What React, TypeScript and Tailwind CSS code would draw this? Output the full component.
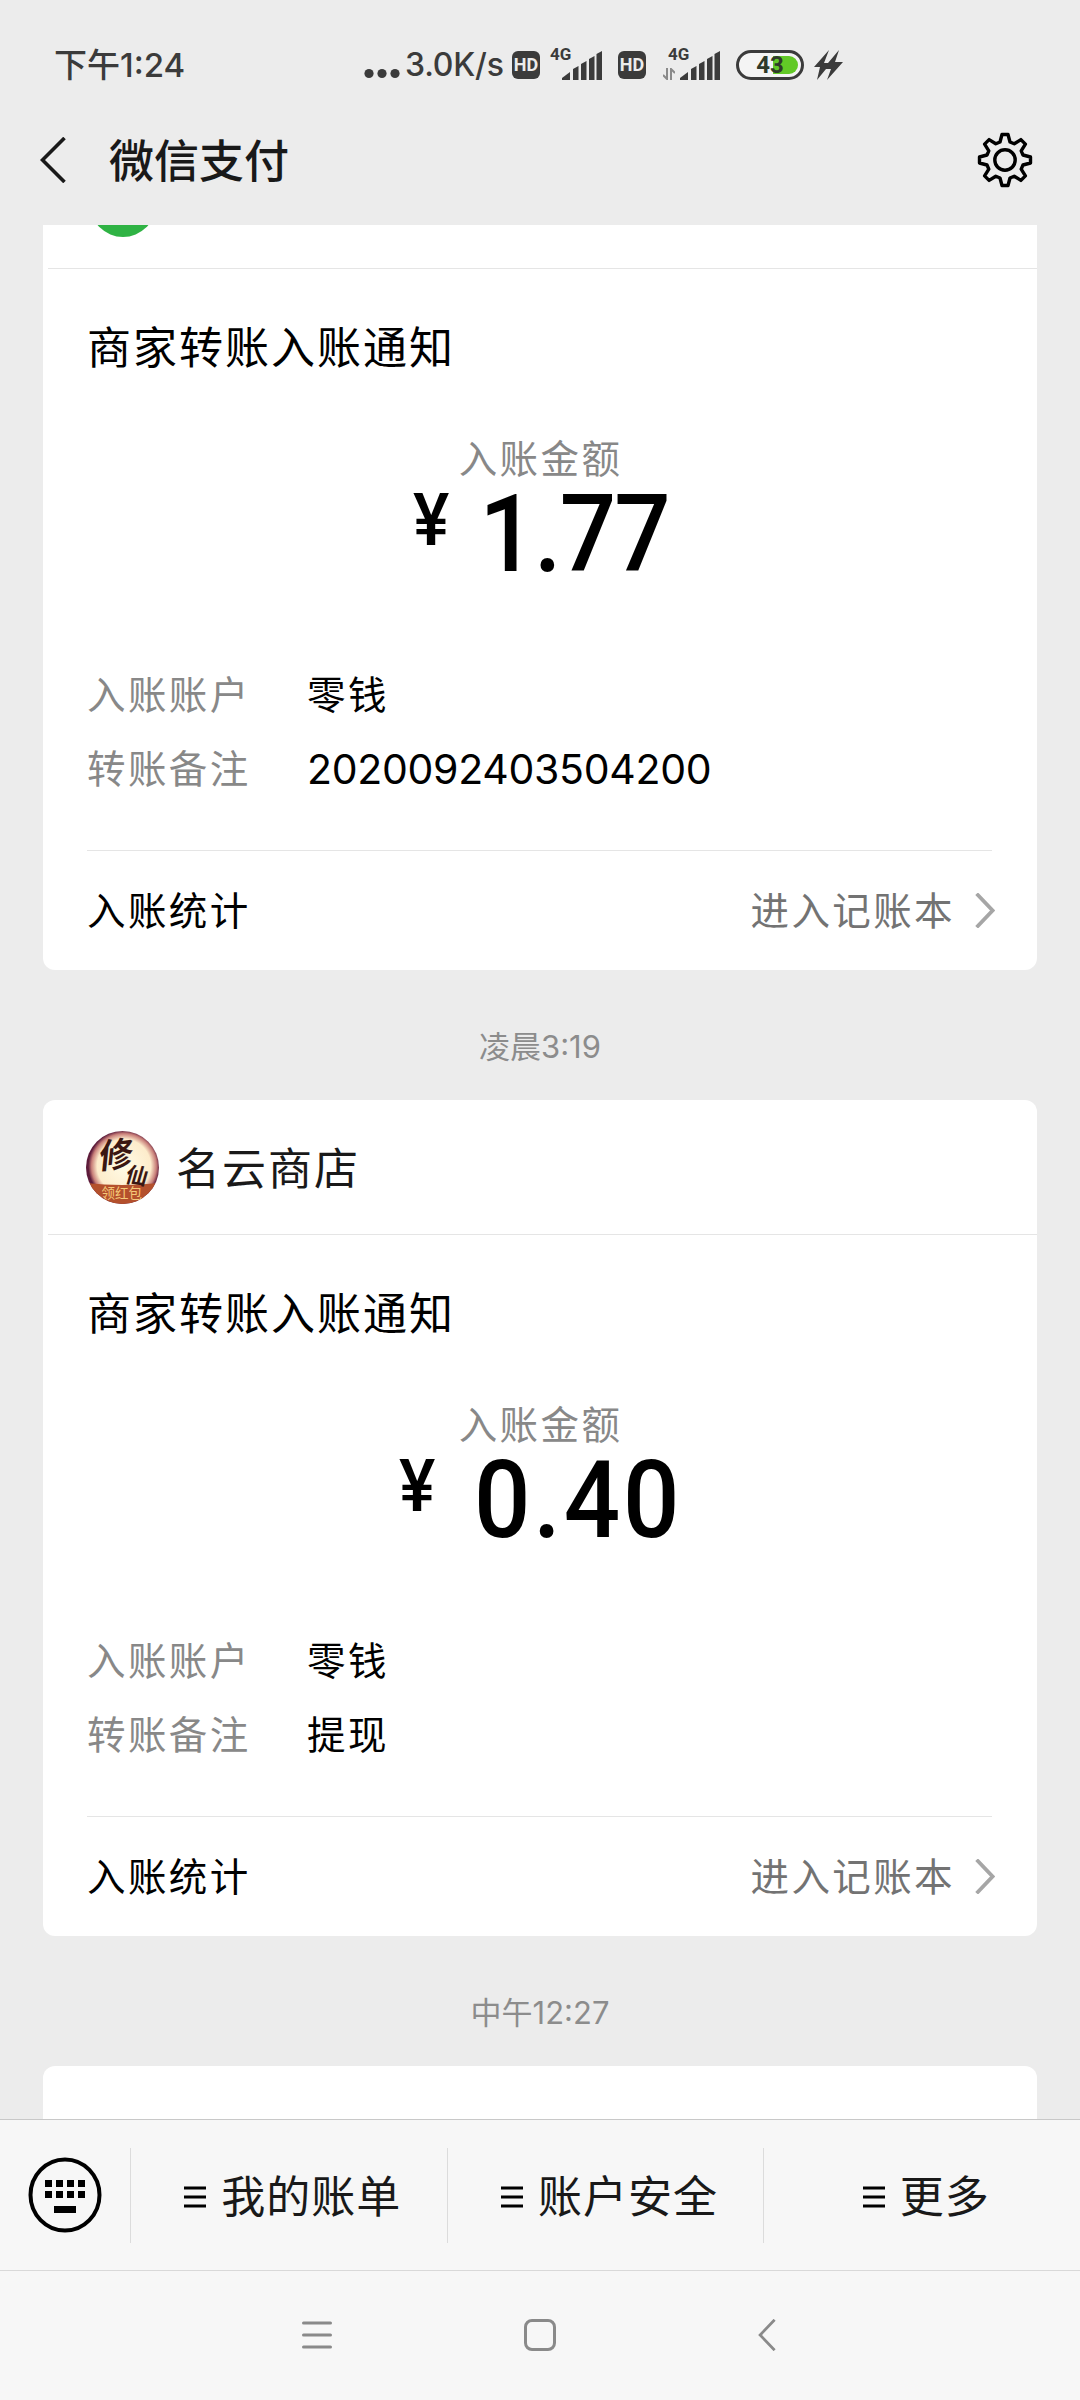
import type { ReactNode } from 'react'

interface Notice {
  amount: string
  amountStyle: string
  remark: string
  avatar: ReactNode
  name: string
}

// 通用箭头
function Chevron({ className, d, strokeWidth }: { className: string; d: string; strokeWidth: number }) {
  return (
    <svg className={className} viewBox="0 0 26 46" fill="none" stroke="currentColor" strokeWidth={strokeWidth}>
      <path d={d} />
    </svg>
  )
}

// 信号强度
function Signal() {
  return (
    <svg className="w-10 h-[29px] shrink-0" viewBox="0 0 40 29" fill="currentColor">
      <path d="M0 29v-2l8-6v8z" />
      <path d="M11 29V18l5.500-3v14z" />
      <path d="M19 29V13l5.500-3v19z" />
      <path d="M27 29V8l5.500-3v24z" />
      <path d="M34.500 29V3L40 0v29z" />
    </svg>
  )
}

function HdBadge() {
  return (
    <span className="flex items-center justify-center w-7 h-7 shrink-0 rounded-md bg-[#3b3b3b] text-[#ececec] font-[Roboto,sans-serif] text-[18px] leading-none font-bold">
      HD
    </span>
  )
}

function NetworkType() {
  return (
    <span className="absolute -left-3 -top-[5px] font-[Roboto,sans-serif] text-[17px] leading-none font-bold">4G</span>
  )
}

function Battery() {
  return (
    <span className="relative flex items-center justify-center w-[68px] h-[30px] rounded-full border-[3px] border-[#3b3b3b] bg-[#f4f4f4] overflow-hidden">
      <span className="absolute right-[3px] top-[3px] w-[25px] h-[18px] rounded-r-full bg-[#62c926]" />
      <span className="relative font-[Roboto,sans-serif] text-[24px] leading-none font-bold text-[#2f3a2a]">43</span>
    </span>
  )
}

function StatusBar() {
  return (
    <div className="flex items-center h-[130px] pl-[54px] text-[#3b3b3b]">
      <span className="w-[310px] text-[33px] leading-none font-medium">下午1:24</span>
      <svg className="w-9 h-7 mr-[5px]" viewBox="0 0 36 28" fill="currentColor">
        <circle cx="5" cy="22.500" r="4.600" />
        <circle cx="18" cy="22.500" r="4.600" />
        <circle cx="31" cy="22.500" r="4.600" />
      </svg>
      <span className="w-[107px] text-[32px] leading-none font-medium tracking-[-0.200px]">3.0K/s</span>
      <HdBadge />
      <div className="relative ml-[22px]">
        <Signal />
        <NetworkType />
      </div>
      <div className="ml-4">
        <HdBadge />
      </div>
      <div className="relative ml-[34px]">
        <Signal />
        <NetworkType />
        <svg className="absolute -left-[17px] top-[17px] w-3 h-3 text-[#8a8a8a]" viewBox="0 0 12 12" fill="none" stroke="currentColor" strokeWidth="2">
          <path d="M4 0v11L0 7M8 12V1l4 4" />
        </svg>
      </div>
      <div className="ml-4">
        <Battery />
      </div>
      <svg className="ml-2.5 w-[29px] h-[30px]" viewBox="0 0 29 30" fill="currentColor">
        <path d="M15 0 0 17h6L3 30l9-11h5l-4 11 16-18h-8l4-12-11 13h-4z" />
      </svg>
    </div>
  )
}

// 设置齿轮
function GearIcon() {
  return (
    <svg className="w-14 h-14 text-black" viewBox="-28 -28 56 56" fill="none" stroke="currentColor" strokeWidth="3.400" strokeLinejoin="round">
      <circle r="10.200" />
      <path d="M-3 -25.500H3L5 -18L9.200 -16.200L15.900 -20.400L20.400 -15.900L16.200 -9.200L18 -5L25.500 -3V3L18 5L16.200 9.200L20.400 15.900L15.900 20.400L9.200 16.200L5 18L3 25.500H-3L-5 18L-9.200 16.200L-15.900 20.400L-20.400 15.900L-16.200 9.200L-18 5L-25.500 3V-3L-18 -5L-16.200 -9.200L-20.400 -15.900L-15.900 -20.400L-9.200 -16.200L-5 -18Z" />
    </svg>
  )
}

function TitleBar() {
  return (
    <div className="flex items-center h-[60px] pl-10 pr-[47px] text-[#191919]">
      <Chevron className="w-[26px] h-[46px]" d="M24.500 1L2.500 23l22 22" strokeWidth={3.6} />
      <h1 className="ml-[43px] pt-[3px] text-[45px] leading-none font-medium">微信支付</h1>
      <div className="ml-auto">
        <GearIcon />
      </div>
    </div>
  )
}

function ShopAvatar() {
  return (
    <svg className="w-[73px] h-[73px]" viewBox="0 0 73 73">
      <defs>
        <radialGradient id="glow" cx="0.52" cy="0.48" r="0.51">
          <stop offset="0" stopColor="#fffbe6" />
          <stop offset="0.72" stopColor="#fdeccb" />
          <stop offset="0.87" stopColor="#c9807a" />
          <stop offset="0.96" stopColor="#5d1b3a" />
        </radialGradient>
        <clipPath id="disc">
          <circle cx="36.500" cy="36.500" r="36.500" />
        </clipPath>
      </defs>
      <g clipPath="url(#disc)">
        <rect width="73" height="73" fill="url(#glow)" />
        <path d="M0 52Q36 56 73 52V73H0Z" fill="#b4502c" />
        <g fill="#3a1712" fontWeight="700">
          <text fontSize="34" transform="translate(12 38) rotate(-6) skewX(-12)">修</text>
          <text fontSize="22" transform="translate(38 51) rotate(8) skewX(-8)">仙</text>
        </g>
        <text x="15.500" y="66.500" fontSize="13.500" fill="#f5c878">领红包</text>
      </g>
    </svg>
  )
}

function GreenAvatar() {
  return (
    <div className="flex items-end justify-center w-[73px] h-[73px] pb-px">
      <span className="w-[66px] h-[66px] rounded-full bg-[#2fb344]" />
    </div>
  )
}

function InfoRow({ label, children }: { label: string; children: ReactNode }) {
  return (
    <div className="flex items-center h-[74px] text-[38.500px] leading-none">
      <span className="w-[220px] tracking-[2.400px] text-[#888888]">{label}</span>
      <span className="text-black">{children}</span>
    </div>
  )
}

function NoticeCard({ notice }: { notice: Notice }) {
  return (
    <section className="h-[836px] rounded-xl bg-white">
      <header className="flex items-center h-[135px] ml-[5px] pl-[38px] border-b border-[#e5e5e5]">
        {notice.avatar}
        <span className="ml-[17px] pt-1 text-[44px] leading-none tracking-[2px] text-[#191919]">{notice.name}</span>
      </header>
      <div className="pl-11 pr-[45px]">
        <h2 className="pt-[55px] text-[44px] leading-[48px] tracking-[2px] text-black">商家转账入账通知</h2>
        <p className="pt-[65px] pl-0.5 text-center text-[38.500px] leading-[44px] tracking-[2.400px] text-[#888888]">入账金额</p>
        <div className="flex justify-center h-[177px] pl-2.5 pt-[14px] text-black font-[Roboto,'Noto_Sans_CJK_SC',sans-serif]">
          <span className="text-[72px] leading-[52px] font-medium scale-x-95">¥</span>
          <span className={`text-[108px] leading-[78px] font-medium scale-x-[0.92] ${notice.amountStyle}`}>{notice.amount}</span>
        </div>
        <InfoRow label="入账账户"><span className="tracking-[2.400px]">零钱</span></InfoRow>
        <InfoRow label="转账备注">
          {/^\d+$/.test(notice.remark) ? (
            <span className="text-[41px] tracking-[-0.300px]">{notice.remark}</span>
          ) : (
            <span className="tracking-[2.400px]">{notice.remark}</span>
          )}
        </InfoRow>
        <footer className="flex items-center h-[120px] mt-11 pt-0.5 border-t border-[#e5e5e5] text-[38.500px] leading-none tracking-[2.400px]">
          <span className="text-black">入账统计</span>
          <span className="ml-auto text-[#737373]">进入记账本</span>
          <Chevron className="ml-5 -mr-[3px] mb-0.5 w-5 h-[35px] text-[#a6a6a6]" d="M2 1l21 22L2 45" strokeWidth={5} />
        </footer>
      </div>
    </section>
  )
}

function TimeLabel({ children }: { children: ReactNode }) {
  return (
    <div className="flex items-center justify-center h-[130px] pt-[22px] text-[31px] leading-none text-[#8c8c8c]">{children}</div>
  )
}

// 键盘切换按钮
function KeyboardIcon() {
  return (
    <svg className="w-[74px] h-[76px] text-black" viewBox="0 0 74 76" fill="currentColor">
      <ellipse cx="37" cy="38" rx="34.500" ry="35.500" fill="none" stroke="currentColor" strokeWidth="4" />
      <path d="M17 23h7v7h-7zM28 23h7v7h-7zM39 23h7v7h-7zM50 23h7v7h-7zM17 34h7v7h-7zM28 34h7v7h-7zM39 34h7v7h-7zM50 34h7v7h-7zM26 49h22v7h-22z" />
    </svg>
  )
}

function MenuButton({ children }: { children: ReactNode }) {
  return (
    <button className="flex items-center justify-center w-[317px] h-[95px] pl-2 border-l border-[#dcdcdc] text-[#191919]">
      <svg className="w-[22px] h-[22px] mr-[15px] mt-[3px] text-black" viewBox="0 0 22 22" stroke="currentColor" strokeWidth="3">
        <path d="M0 2h22M0 11h22M0 20h22" />
      </svg>
      <span className="pt-[3px] text-[44px] leading-none tracking-[1px]">{children}</span>
    </button>
  )
}

function BottomMenu() {
  return (
    <div className="flex items-center h-[151px] border-t border-[#c8c8c8] bg-[#f7f7f7]">
      <div className="w-[130px] shrink-0 pl-7">
        <KeyboardIcon />
      </div>
      <MenuButton>我的账单</MenuButton>
      <MenuButton>账户安全</MenuButton>
      <MenuButton>更多</MenuButton>
    </div>
  )
}

function SystemNav() {
  return (
    <div className="flex items-center h-[130px] pl-[302px] pb-0.5 border-t border-[#d9d9d9] bg-[#f7f7f7] text-[#8a8a8a]">
      <svg className="w-[30px] h-[30px]" viewBox="0 0 30 30" stroke="currentColor" strokeWidth="3" strokeLinecap="round">
        <path d="M1.500 3h27M1.500 15h27M1.500 27h27" />
      </svg>
      <span className="ml-48 w-8 h-8 rounded-lg border-[3px] border-[#8a8a8a]" />
      <Chevron className="ml-[202px] w-[18px] h-8" d="M24 1L3 23l21 22" strokeWidth={4} />
    </div>
  )
}

const NOTICES: Notice[] = [
  { amount: '1.77', amountStyle: 'ml-[21px] tracking-[-2px]', remark: '2020092403504200', avatar: <GreenAvatar />, name: '' },
  { amount: '0.40', amountStyle: 'ml-[28px] tracking-[3px]', remark: '提现', avatar: <ShopAvatar />, name: '名云商店' },
]

export default function App() {
  return (
    <div className="flex flex-col w-[1080px] h-[2400px] overflow-hidden bg-[#ececec] font-[Inter,'Noto_Sans_CJK_SC',sans-serif]">
      <div className="h-[225px] shrink-0">
        <StatusBar />
        <TitleBar />
      </div>
      <main className="flex-1 min-h-0 px-[43px] overflow-hidden">
        <div className="-mt-[91px]">
          <NoticeCard notice={NOTICES[0]} />
          <TimeLabel>凌晨3:19</TimeLabel>
          <NoticeCard notice={NOTICES[1]} />
          <TimeLabel>中午12:27</TimeLabel>
          <section className="h-[134px] rounded-xl bg-white" />
        </div>
      </main>
      <BottomMenu />
      <SystemNav />
    </div>
  )
}
